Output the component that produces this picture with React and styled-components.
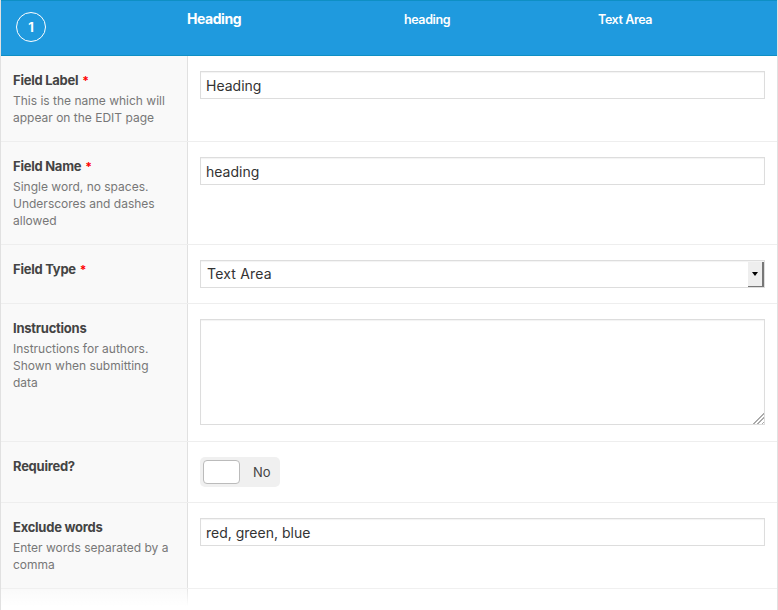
import React from 'react';
import styled, { createGlobalStyle } from 'styled-components';

const GlobalStyle = createGlobalStyle`
  html, body {
    margin: 0;
    padding: 0;
    background: #fff;
  }
  body {
    font-family: Inter, "Open Sans", "Liberation Sans", sans-serif;
    color: #444;
  }
`;

const Page = styled.div`
  position: relative;
  width: 778px;
  height: 610px;
  overflow: hidden;
  box-sizing: border-box;
  border-right: 1px solid #e1e1e1;
  border-left: 1px solid #e1e1e1;
`;

const Header = styled.div`
  display: flex;
  height: 56px;
  margin: 0 -1px;
  box-sizing: border-box;
  background: #1f9ade;
  border: 1px solid #0e8fc4;
  color: #fff;
`;

const OrderCell = styled.div`
  width: 186px;
  padding: 11px 0 0 15px;
  box-sizing: border-box;
`;

const Order = styled.div`
  display: flex;
  align-items: center;
  justify-content: center;
  width: 30px;
  height: 30px;
  box-sizing: border-box;
  border: 1.5px solid #fff;
  border-radius: 50%;
  font-size: 13px;
  font-weight: 700;
`;

const HeaderCell = styled.div`
  width: ${p => p.$width}px;
  padding-top: ${p => (p.$large ? 9 : 10)}px;
  font-size: ${p => (p.$large ? 14 : 12.5)}px;
  line-height: 17px;
  font-weight: ${p => (p.$large ? 700 : 600)};
  letter-spacing: ${p => (p.$large ? -0.45 : -0.4)}px;
`;

const Row = styled.div`
  display: grid;
  grid-template-columns: 187px 1fr;
  border-top: ${p => (p.$first ? 'none' : '1px solid #eee')};
`;

const LabelCell = styled.div`
  padding: 14px 12px 15px 12px;
  background: #f9f9f9;
  border-right: 1px solid #e1e1e1;
`;

const Title = styled.div`
  font-size: 13px;
  line-height: 20px;
  font-weight: 700;
  letter-spacing: -0.25px;
  color: #444;
`;

const Star = styled.span`
  margin-left: 4px;
  font-size: 12px;
  line-height: 0;
  color: #f00;
`;

const Description = styled.div`
  margin-top: 2px;
  font-size: 12px;
  line-height: 17px;
  color: #777;
`;

const FieldCell = styled.div`
  padding: 15px 12px 15px 12px;
`;

const TextInput = styled.input`
  display: block;
  width: 100%;
  height: 28px;
  box-sizing: border-box;
  padding: 0 5px;
  border: 1px solid #ddd;
  border-radius: 0;
  outline: none;
  background: #fff;
  box-shadow: inset 0 1px 1px rgba(0, 0, 0, 0.05);
  font: 400 14px/26px Inter, "Open Sans", sans-serif;
  color: #333;
`;

const SelectBox = styled.div`
  display: flex;
  align-items: stretch;
  height: 28px;
  box-sizing: border-box;
  border: 1px solid #ddd;
  background: #fff;
  box-shadow: inset 0 1px 1px rgba(0, 0, 0, 0.05);
`;

const SelectText = styled.div`
  flex: 1;
  padding-left: 6px;
  font-size: 14px;
  line-height: 26px;
  letter-spacing: 0.2px;
  color: #333;
`;

const SelectArrow = styled.div`
  display: flex;
  align-items: center;
  justify-content: center;
  width: 14px;
  margin: 1px 0 0;
  background: #eee;
  border-right: 2px solid #777;
  border-bottom: 1px solid #777;
`;

const Caret = styled.div`
  width: 0;
  height: 0;
  border-left: 3.5px solid transparent;
  border-right: 3.5px solid transparent;
  border-top: 4px solid #000;
`;

const TextArea = styled.textarea`
  display: block;
  width: 100%;
  height: 106px;
  box-sizing: border-box;
  margin-bottom: 1px;
  border: 1px solid #ddd;
  border-radius: 0;
  outline: none;
  background: #fff;
  box-shadow: inset 0 1px 1px rgba(0, 0, 0, 0.05);

  &::-webkit-resizer {
    background:
      linear-gradient(135deg, #fff 50%, transparent 50%) right bottom / 12px 12px no-repeat,
      repeating-linear-gradient(135deg, #aaa 0 1px, transparent 1px 3px) right bottom / 12px 12px no-repeat;
  }
`;

const Toggle = styled.div`
  display: flex;
  align-items: center;
  width: 80px;
  height: 30px;
  box-sizing: border-box;
  padding: 3px;
  background: #f0f0f0;
  border-radius: 5px;
`;

const Knob = styled.div`
  width: 37px;
  height: 24px;
  box-sizing: border-box;
  background: #fff;
  border: 1px solid #bbb;
  border-radius: 4px;
`;

const ToggleText = styled.div`
  margin-left: 13px;
  font-size: 13px;
  color: #444;
`;

const Fade = styled.div`
  position: absolute;
  left: -1px;
  right: -1px;
  bottom: 0;
  height: 24px;
  background: linear-gradient(to bottom, rgba(255, 255, 255, 0), #fff 85%);
`;

function Field({ title, required, description, first, children }) {
  return (
    <Row $first={first}>
      <LabelCell>
        <Title>
          {title}
          {required && <Star>*</Star>}
        </Title>
        {description && <Description>{description}</Description>}
      </LabelCell>
      <FieldCell>{children}</FieldCell>
    </Row>
  );
}

export default function App() {
  return (
    <Page>
      <GlobalStyle />
      <Header>
        <OrderCell>
          <Order>1</Order>
        </OrderCell>
        <HeaderCell $large $width={217}>Heading</HeaderCell>
        <HeaderCell $width={194}>heading</HeaderCell>
        <HeaderCell $width={150}>Text Area</HeaderCell>
      </Header>
      <Field first required title="Field Label" description={<>This is the name which will<br />appear on the EDIT page</>}>
        <TextInput readOnly value="Heading" />
      </Field>
      <Field required title="Field Name" description={<>Single word, no spaces.<br />Underscores and dashes<br />allowed</>}>
        <TextInput readOnly value="heading" />
      </Field>
      <Field required title="Field Type">
        <SelectBox>
          <SelectText>Text Area</SelectText>
          <SelectArrow><Caret /></SelectArrow>
        </SelectBox>
      </Field>
      <Field title="Instructions" description={<>Instructions for authors.<br />Shown when submitting<br />data</>}>
        <TextArea readOnly />
      </Field>
      <Field title="Required?">
        <Toggle>
          <Knob />
          <ToggleText>No</ToggleText>
        </Toggle>
      </Field>
      <Field title="Exclude words" description={<>Enter words separated by a<br />comma</>}>
        <TextInput readOnly value="red, green, blue" />
      </Field>
      <Row>
        <LabelCell><Title>&nbsp;</Title></LabelCell>
        <FieldCell />
      </Row>
      <Fade />
    </Page>
  );
}
